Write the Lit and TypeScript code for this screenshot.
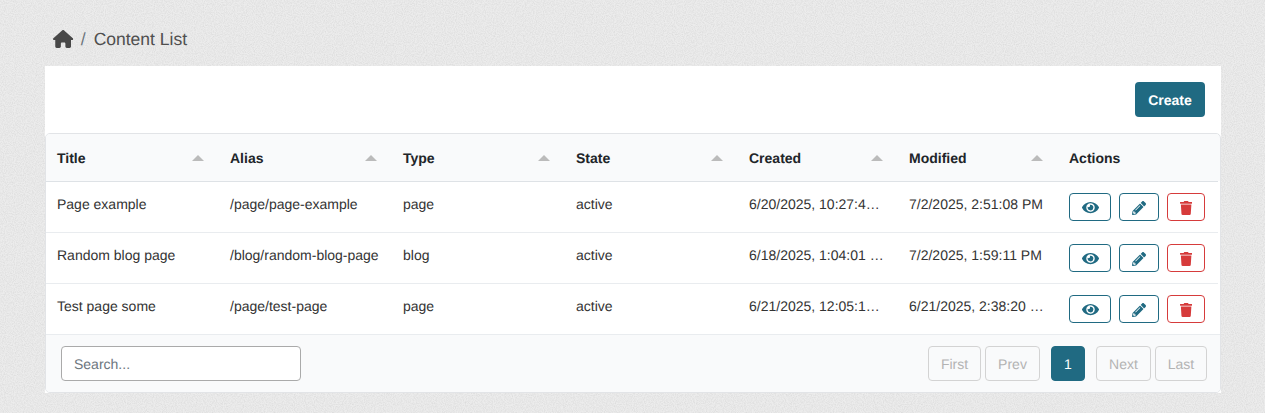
import { LitElement, html, css, svg } from "lit";
import { customElement } from "lit/decorators.js";

const HOME = "M575.8 255.5c0 18-15 32.1-32 32.1h-32l.7 160.2c0 2.7-.2 5.4-.5 8.1V472c0 22.1-17.9 40-40 40H456c-1.1 0-2.2 0-3.3-.1c-1.4 .1-2.8 .1-4.2 .1H416 392c-22.1 0-40-17.9-40-40V448 384c0-17.7-14.3-32-32-32H256c-17.7 0-32 14.3-32 32v64 24c0 22.1-17.9 40-40 40H160 128.1c-1.5 0-3-.1-4.5-.2c-1.2 .1-2.4 .2-3.6 .2H104c-22.1 0-40-17.9-40-40V360c0-.9 0-1.9 .1-2.8V287.6H32c-18 0-32-14-32-32.1c0-9 3-17 10-24L266.4 8c7-7 15-8 22-8s15 2 21 7L564.8 231.5c8 7 12 15 11 24z";
const EYE = "M572.52 241.4C518.29 135.59 410.93 64 288 64S57.68 135.64 3.48 241.41a32.35 32.35 0 0 0 0 29.19C57.71 376.41 165.07 448 288 448s230.32-71.64 284.52-177.41a32.35 32.35 0 0 0 0-29.19zM288 400a144 144 0 1 1 144-144 143.93 143.93 0 0 1-144 144zm0-240a95.31 95.31 0 0 0-25.31 3.79 47.85 47.85 0 0 1-66.9 66.9A95.78 95.78 0 1 0 288 160z";
const PENCIL = "M497.9 142.1l-46.1 46.1c-4.7 4.7-12.3 4.7-17 0l-111-111c-4.7-4.7-4.7-12.3 0-17l46.1-46.1c18.7-18.7 49.1-18.7 67.9 0l60.1 60.1c18.8 18.7 18.8 49.1 0 67.9zM284.2 99.8L21.6 362.4.4 483.9c-2.9 16.4 11.4 30.6 27.8 27.8l121.5-21.3 262.6-262.6c4.7-4.7 4.7-12.3 0-17l-111-111c-4.8-4.7-12.4-4.7-17.1 0zM124.1 339.9c-5.5-5.5-5.5-14.3 0-19.8l154-154c5.5-5.5 14.3-5.5 19.8 0s5.5 14.3 0 19.8l-154 154c-5.5 5.5-14.3 5.5-19.8 0zM88 424h48v36.3l-64.5 11.3-31.1-31.1L51.7 376H88v48z";
const TRASH = "M432 32H312l-9.4-18.7A24 24 0 0 0 281.1 0H166.8a23.72 23.72 0 0 0-21.4 13.3L136 32H16A16 16 0 0 0 0 48v32a16 16 0 0 0 16 16h416a16 16 0 0 0 16-16V48a16 16 0 0 0-16-16zM53.2 467a48 48 0 0 0 47.9 45h245.8a48 48 0 0 0 47.9-45L416 128H32z";

const icon = (d: string, vb: string, cls: string) =>
  html`<svg class=${cls} viewBox=${vb} aria-hidden="true">${svg`<path fill="currentColor" d=${d}></path>`}</svg>`;

const COLS = ["Title", "Alias", "Type", "State", "Created", "Modified"];
const ROWS = [
  ["Page example", "/page/page-example", "page", "active", "6/20/2025, 10:27:43 AM", "7/2/2025, 2:51:08 PM"],
  ["Random blog page", "/blog/random-blog-page", "blog", "active", "6/18/2025, 1:04:01 PM", "7/2/2025, 1:59:11 PM"],
  ["Test page some", "/page/test-page", "page", "active", "6/21/2025, 12:05:12 PM", "6/21/2025, 2:38:20 PM"],
];

@customElement("app-root")
export class AppRoot extends LitElement {
  static styles = css`
    :host {
      display: block;
      position: relative;
      height: 413px;
      overflow: hidden;
      background: #ececec;
      font-family: "Liberation Sans", Arial, sans-serif;
      font-size: 14px;
      color: #333;
      text-rendering: geometricPrecision;
    }
    .noise {
      position: absolute;
      inset: 0;
      width: 100%;
      height: 100%;
    }
    .page {
      position: relative;
      padding: 0 44px 0 45px;
    }
    .crumbs {
      display: flex;
      align-items: center;
      height: 66px;
      padding: 12px 0 0 7.5px;
      box-sizing: border-box;
      color: #4f4f4f;
      font-size: 17.5px;
    }
    .home {
      width: 20.25px;
      height: 18px;
      color: #484848;
    }
    .sep {
      margin: 0 8px;
      color: #6c757d;
    }
    .card {
      background: #fff;
    }
    .top {
      display: flex;
      justify-content: flex-end;
      padding: 16px;
    }
    .create {
      width: 70px;
      height: 35px;
      border: 0;
      border-radius: 4px;
      background: #206a82;
      color: #fff;
      font: bold 14px "Liberation Sans", Arial, sans-serif;
      text-rendering: geometricPrecision;
      padding: 0;
    }
    .wrap {
      border: 1px solid #e2e4e7;
      border-radius: 5px;
      overflow: hidden;
      background: linear-gradient(#f9fafb 47px, #fff 47px);
    }
    table {
      width: 1172px;
      table-layout: fixed;
      border-collapse: collapse;
    }
    .c-n { width: 173px; }
    .c-d { width: 160px; }
    th {
      height: 47px;
      padding: 0 0 0 11px;
      text-align: left;
      font-weight: bold;
      color: #212529;
      background: #f9fafb;
      border-bottom: 1px solid #dee2e6;
    }
    .head {
      display: flex;
      align-items: center;
      justify-content: space-between;
      padding-right: 15px;
    }
    .caret {
      width: 0;
      height: 0;
      border-left: 6px solid transparent;
      border-right: 6px solid transparent;
      border-bottom: 6px solid #bbb;
    }
    td {
      height: 44px;
      padding: 0 12px 6px 11px;
      border-bottom: 1px solid #e9ecef;
      white-space: nowrap;
      overflow: hidden;
      text-overflow: ellipsis;
    }
    td.cell-actions {
      height: 50px;
      padding-bottom: 0;
    }
    tr:last-child td { border-bottom: 0; }
    .actions {
      display: flex;
      gap: 8px;
      align-items: center;
    }
    .act {
      display: flex;
      align-items: center;
      justify-content: center;
      height: 28px;
      box-sizing: border-box;
      background: #fff;
      border-radius: 4px;
      border: 1px solid #206a82;
      color: #206a82;
      padding: 1px 0 0;
    }
    .act.view { width: 42px; }
    .act.edit { width: 40px; }
    .act.del { width: 38px; border-color: #d63b3b; color: #d63b3b; }
    .i-eye { width: 17px; height: 15.1px; }
    .i-pen { width: 14px; height: 14px; }
    .i-del { width: 12.25px; height: 14px; }
    .foot {
      display: flex;
      align-items: center;
      justify-content: space-between;
      height: 57px;
      padding: 0 13px 0 15px;
      background: #f9fafb;
      border-top: 1px solid #e9ecef;
    }
    input {
      box-sizing: border-box;
      width: 240px;
      height: 35px;
      padding: 0 12px;
      border: 1px solid #aaa;
      border-radius: 4px;
      background: #fff;
      font: 14px "Liberation Sans", Arial, sans-serif;
      color: #212529;
      text-rendering: geometricPrecision;
      outline: none;
    }
    input::placeholder { color: #6c757d; opacity: 1; }
    .pager { display: flex; align-items: center; }
    .pg {
      display: flex;
      align-items: center;
      justify-content: center;
      box-sizing: border-box;
      height: 35px;
      border: 1px solid #d3d3d3;
      border-radius: 4px;
      color: #b3b3b3;
      background: transparent;
      font: 14px "Liberation Sans", Arial, sans-serif;
      text-rendering: geometricPrecision;
      padding: 0;
    }
    .pg.w53 { width: 53px; }
    .pg.w55 { width: 55px; }
    .pg.w52 { width: 52px; }
    .pg.cur {
      width: 34px;
      margin: 0 11px;
      background: #206a82;
      border-color: #206a82;
      color: #fff;
    }
    .pg.gap { margin-left: 4px; }
  `;

  render() {
    return html`
      <svg class="noise" aria-hidden="true">
        <filter id="n"><feTurbulence type="fractalNoise" baseFrequency="0.9" numOctaves="2" seed="3"></feTurbulence>
          <feColorMatrix type="matrix" values="0 0 0 0 0.45  0 0 0 0 0.45  0 0 0 0 0.45  0.5 0 0 0 -0.17"></feColorMatrix></filter>
        <rect width="100%" height="100%" filter="url(#n)"></rect>
      </svg>
      <div class="page">
        <nav class="crumbs">
          ${icon(HOME, "0 0 576 512", "home")}
          <span class="sep">/</span>
          <span>Content List</span>
        </nav>
        <section class="card">
          <div class="top"><button class="create">Create</button></div>
          <div class="wrap">
            <table>
              <colgroup>
                <col class="c-n" /><col class="c-n" /><col class="c-n" /><col class="c-n" />
                <col class="c-d" /><col class="c-d" /><col />
              </colgroup>
              <thead>
                <tr>
                  ${COLS.map((c) => html`<th><div class="head"><span>${c}</span><i class="caret"></i></div></th>`)}
                  <th>Actions</th>
                </tr>
              </thead>
              <tbody>
                ${ROWS.map(
                  (r) => html`<tr>
                    ${r.map((v) => html`<td>${v}</td>`)}
                    <td class="cell-actions">
                      <div class="actions">
                        <button class="act view">${icon(EYE, "0 0 576 512", "i-eye")}</button>
                        <button class="act edit">${icon(PENCIL, "0 0 512 512", "i-pen")}</button>
                        <button class="act del">${icon(TRASH, "0 0 448 512", "i-del")}</button>
                      </div>
                    </td>
                  </tr>`
                )}
              </tbody>
            </table>
            <div class="foot">
              <input placeholder="Search..." />
              <div class="pager">
                <button class="pg w53">First</button>
                <button class="pg w55 gap">Prev</button>
                <button class="pg cur">1</button>
                <button class="pg w55">Next</button>
                <button class="pg w52 gap">Last</button>
              </div>
            </div>
          </div>
        </section>
      </div>
    `;
  }
}
